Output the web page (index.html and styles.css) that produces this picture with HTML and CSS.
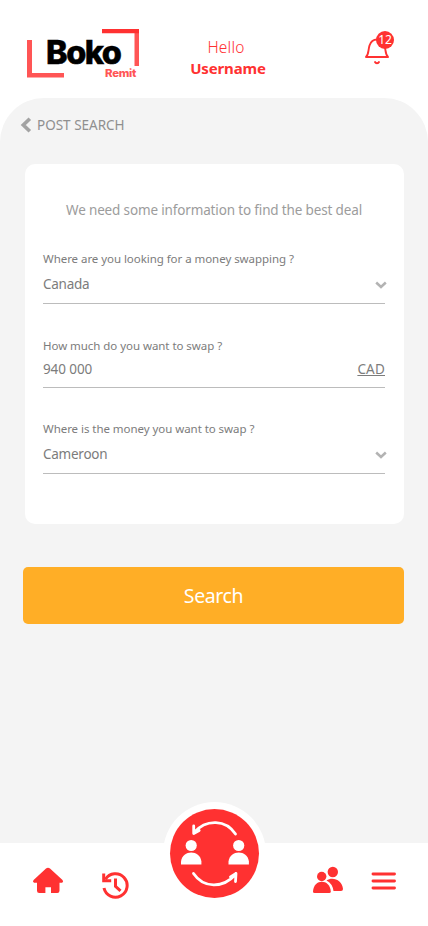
FILE: index.html
```html
<!DOCTYPE html>
<html lang="en">
<head>
<meta charset="utf-8">
<title>Boko Remit</title>
<link rel="stylesheet" href="styles.css">
</head>
<body>
<header class="header">
  <svg class="logo" viewBox="27 28 113 50" width="113" height="50">
    <path d="M27 40h5v33h32v4.500H27z" fill="#ff5555"/>
    <path d="M134.500 29h4.500v37h-4.500z" fill="#ff5555"/>
    <path d="M102 29h37v4.200h-37z" fill="#ff3131"/>
    <text class="logo-main" x="46" y="63.800" textLength="74.500" lengthAdjust="spacingAndGlyphs">Boko</text>
    <text class="logo-sub" x="105" y="76.800" textLength="31" lengthAdjust="spacingAndGlyphs">Remit</text>
  </svg>
  <div class="greeting">
    <div class="hello">Hello</div>
    <div class="username">Username</div>
  </div>
  <div class="bell">
    <svg viewBox="364 30 31 36" width="31" height="36" fill="none" stroke="#ff3131" stroke-width="1.900" stroke-linecap="round" stroke-linejoin="round">
      <path d="M366 57c3-3 2-7 3.500-11.500C371 41 374 39.500 377 39.500s6 1.500 7.500 6C386 50 385 54 388 57z"/>
      <path d="M375 62c.7 1.600 3.300 1.600 4 0"/>
    </svg>
    <span class="badge">12</span>
  </div>
</header>
<main class="main">
  <a class="back">
    <svg width="12" height="16" viewBox="0 0 12 16" fill="none" stroke="#a3a3a3" stroke-width="3.600"><path d="M9.800 1.700 3.300 8l6.500 6.300"/></svg>
    <span class="back-text">POST SEARCH</span>
  </a>
  <section class="card">
    <p class="intro">We need some information to find the best deal</p>
    <div class="field">
      <div class="label">Where are you looking for a money swapping ?</div>
      <div class="value"><span>Canada</span>
        <svg class="chevron" width="12" height="10" viewBox="0 0 12 10" fill="none" stroke="#b3b3b3" stroke-width="2.500"><path d="M1.200 3.500 6 8l4.800-4.500"/></svg></div>
    </div>
    <div class="field amount">
      <div class="label">How much do you want to swap ?</div>
      <div class="value"><span class="number">940 000</span><span class="currency">CAD</span></div>
    </div>
    <div class="field source">
      <div class="label">Where is the money you want to swap ?</div>
      <div class="value"><span>Cameroon</span>
        <svg class="chevron" width="12" height="10" viewBox="0 0 12 10" fill="none" stroke="#b3b3b3" stroke-width="2.500"><path d="M1.200 3.500 6 8l4.800-4.500"/></svg></div>
    </div>
  </section>
  <button class="search">Search</button>
</main>
<nav class="nav">
  <svg class="home" width="32" height="28" viewBox="32 867 32 28" fill="#ff3131">
    <path d="M46 868.500q2-1.500 4 0l12.500 11.500q1.400 1.700-.3 2.800H59.500v8q0 2.200-2.200 2.200H51v-5.800h-5.600v5.800h-6.200q-2.200 0-2.200-2.200v-8H34q-1.900-1.100-.4-2.800z"/>
  </svg>
  <svg class="history" width="28" height="28" viewBox="102 872 28 28" fill="none" stroke="#ff3131" stroke-width="3">
    <path d="M105.500 879.300A11.700 11.700 0 1 1 104 888"/>
    <path d="M103.700 873.500v7.300h7.500"/>
    <path d="M115.500 878.500v7.800l5 4.600"/>
  </svg>
  <div class="swap">
    <svg width="104" height="104" viewBox="0 0 104 104">
      <circle cx="51.500" cy="52.500" r="51.500" fill="#fff"/>
      <circle cx="51.500" cy="52.500" r="44.500" fill="#ff3131"/>
      <g fill="none" stroke="#fff" stroke-width="2.800" stroke-linecap="round" stroke-linejoin="round">
        <path d="M72.500 33C63 18.500 43.500 17.500 31 31.500M30.700 25v7.500l5.500-3"/>
        <path d="M30.500 72.500C40.500 87.500 60 87.500 72.500 73.500M73 72.500 72.500 80.500M73 72.500l-5.500 3.500"/>
      </g>
      <g fill="#fff">
        <circle cx="28.200" cy="44.500" r="5.600"/><path d="M18 63.500V60.500c1.500-12 19-12 20.400 0v3z"/>
        <circle cx="75.700" cy="44.500" r="5.600"/><path d="M65.500 63.500V60.500c1.500-12 19-12 20.400 0v3z"/>
      </g>
    </svg>
  </div>
  <svg class="people" width="32" height="28" viewBox="312 866 32 28" fill="#ff3131">
    <circle cx="332.800" cy="872" r="5.200"/>
    <path d="M326.500 880.500c6-4.500 16-.5 16.500 8.500q0 2-2 2h-7.500q-1-7.500-7-10.500z"/>
    <circle cx="321.700" cy="876.500" r="4.700"/>
    <path d="M313 891.500c.7-13 17-13 17.800 0q0 1.500-1.500 1.500h-14.800q-1.500 0-1.500-1.500z"/>
  </svg>
  <svg class="menu" width="26" height="20" viewBox="371 871 26 20" stroke="#ff3131" stroke-width="2.900" stroke-linecap="round">
    <path d="M373 874h21.500M373 881h21.500M373 888h21.500"/>
  </svg>
</nav>
</body>
</html>
```
FILE: styles.css
```css
* { box-sizing: border-box; }
body {
  margin: 0;
  width: 428px;
  height: 926px;
  overflow: hidden;
  display: flex;
  flex-direction: column;
  background: #fff;
  color: #7c7c7c;
  font-family: "Noto Sans", "Open Sans", sans-serif;
}
.header {
  height: 98px;
  flex: none;
  display: flex;
  align-items: flex-start;
}
.logo { margin: 28px 0 0 27px; flex: none; }
.logo-main { font: 800 33px Inter, sans-serif; letter-spacing: -1.5px; fill: #000; stroke: #000; stroke-width: .5; }
.logo-sub { font: 800 11px Inter, sans-serif; letter-spacing: -.3px; fill: #ff5555; }
.greeting {
  width: 80px;
  margin: 37px 0 0 48px;
  text-align: center;
  color: #ff3131;
  line-height: 21px;
  white-space: nowrap;
}
.hello { margin-left: -4px; font-size: 15.5px; font-weight: 300; letter-spacing: .2px; }
.username { font-size: 15px; font-weight: 700; letter-spacing: -.15px; }
.bell { position: relative; margin: 30px 0 0 96px; height: 36px; }
.bell svg { display: block; }
.badge {
  position: absolute;
  left: 12px;
  top: 1px;
  width: 18px;
  height: 18px;
  border-radius: 50%;
  background: #ff3131;
  color: #fff;
  font-size: 12px;
  line-height: 18px;
  text-align: center;
}
.main {
  height: 745px;
  flex: none;
  background: #f4f4f4;
  border-radius: 44px 44px 0 0;
  padding: 17px 24px 0 25px;
}
.back {
  display: flex;
  align-items: center;
  height: 20px;
  margin-left: -5px;
  gap: 5px;
  color: #8f8f8f;
  font-size: 13.5px;
  white-space: nowrap;
}
.card {
  height: 360px;
  margin-top: 29px;
  padding: 36px 19px 0 18px;
  background: #fff;
  border-radius: 10px;
}
.intro {
  margin: 0;
  text-align: center;
  color: #9c9c9c;
  font-size: 13.5px;
  line-height: 20px;
  letter-spacing: -.15px;
  white-space: nowrap;
}
.field { height: 55px; margin-top: 29px; border-bottom: 1px solid #bcbcbc; }
.amount { margin-top: 32px; height: 52px; }
.source { margin-top: 31px; height: 55px; }
.label { font-size: 11.5px; line-height: 20px; letter-spacing: -.05px; white-space: nowrap; }
.value {
  display: flex;
  align-items: center;
  justify-content: space-between;
  height: 20px;
  margin-top: 5px;
  font-size: 13.5px;
  letter-spacing: -.25px;
}
.amount .value { margin-top: 3px; }
.number { letter-spacing: -.1px; }
.chevron { margin-right: -1.5px; }
.currency { text-decoration: underline; letter-spacing: .2px; }
.search {
  display: block;
  width: 381px;
  height: 57px;
  margin: 43px 0 0 -2px;
  padding: 0;
  border: 0;
  border-radius: 5px;
  background: #ffae26;
  color: #fff;
  font: 400 19.5px "Noto Sans", sans-serif;
  letter-spacing: -.4px;
}
.nav {
  height: 83px;
  flex: none;
  display: flex;
  align-items: flex-start;
}
.nav svg { display: block; flex: none; }
.home { margin: 24px 0 0 32px; }
.history { margin: 29px 0 0 38px; }
.swap { margin: -42px 0 0 33px; }
.people { margin: 23px 0 0 45px; }
.menu { margin: 28px 0 0 27px; }
```
